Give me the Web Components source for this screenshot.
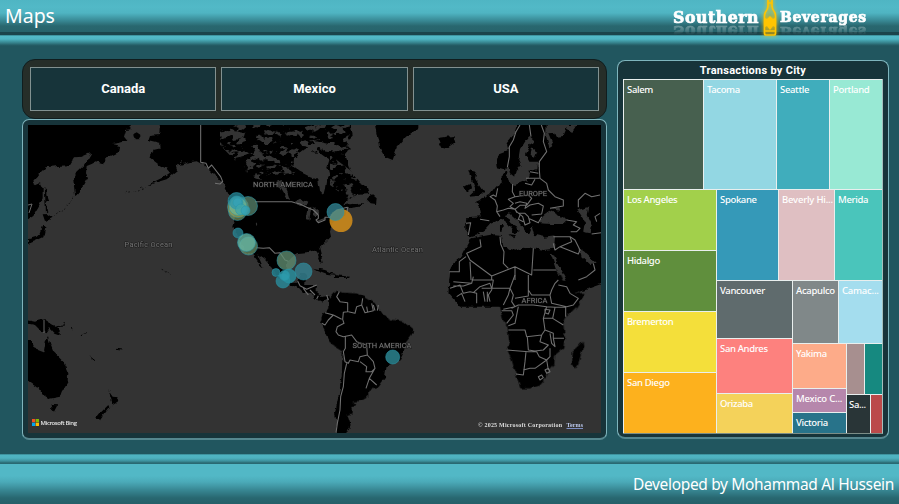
<!DOCTYPE html>
<html lang="en"><head><meta charset="utf-8"><title>Maps</title>
<style>html,body{margin:0;height:100%;overflow:hidden;background:#21565f;font-family:"Noto Sans",sans-serif}</style></head>
<body><report-page></report-page>
<script>
const define=(name,html)=>customElements.define(name,class extends HTMLElement{
  constructor(){super();this.attachShadow({mode:'open'}).innerHTML=html;}
});

define('brand-logo',`<style>
:host{display:flex;align-items:flex-start;height:38px;font:bold 17.500px/20px "DejaVu Serif Condensed","DejaVu Serif",serif;font-stretch:condensed;color:#fff;-webkit-text-stroke:.7px #fff}
span{display:block;margin-top:7px;height:20px;white-space:nowrap;-webkit-box-reflect:below -5px linear-gradient(transparent 35%,rgba(255,255,255,.45))}
.a{width:87px;letter-spacing:.53px}.b{width:87px;font-size:15.500px;letter-spacing:.7px}
svg{width:20px;height:42px;overflow:visible;filter:drop-shadow(0 0 2px #ffc400)}
</style><span class="a">Southern</span>
<svg viewBox="0 0 20 42"><path d="M8 -2V6Q8 9 5.500 12Q4.500 14 4.500 16V33Q4.500 35 6 35H14Q15.500 35 15.500 33V16Q15.500 14 14.500 12Q12 9 12 6V-2" fill="#ffc400" fill-opacity=".12" stroke="#ffc400" stroke-width="1.700"/><path d="M8 3H12M5 31H15" stroke="#ffc400" stroke-width="1.500"/><path d="M5 18L7 19L10 16L13 19L15 18V27L13 26L10 30L7 26L5 27Z" fill="#ffc400"/></svg>
<span class="b">Beverages</span>`);

define('page-header',`<style>
:host{display:block;height:46px}
.bar{height:35px;box-sizing:border-box;border-bottom:3px solid #1b454c;background:linear-gradient(#4fb5c3,#52b9c7 7px,#4fb4c2 13px,#3a8c98 20px,#29676f 26px,#27636b 32px);display:flex;justify-content:space-between;padding:0 31px 0 5px}
.line{height:11px;background:linear-gradient(#2b717a,#53bac8 1px,#4fb6c4 4px,#347f89 8px,#265f68 10px,#21565f)}
h1{margin:0;font:400 19.500px/31px "Noto Sans",sans-serif;color:#fff;width:60px}
brand-logo{width:195px}
</style><div class="bar"><h1>Maps</h1><brand-logo></brand-logo></div><div class="line"></div>`);

define('page-footer',`<style>
:host{display:block;height:50px}
.line{height:10px;background:linear-gradient(#2e737d,#4fb4c2 1px,#4eb2c0 4px,#3d919d 7px,#296871 9px,#2a6b74)}
.bar{height:40px;text-align:right;padding-right:5px;font:400 15.500px/40px "Noto Sans",sans-serif;letter-spacing:-.34px;color:#fff;background:linear-gradient(#52b8c6,#52b8c6 12px,#4baab8 18px,#388793 26px,#286770 34px,#266069)}
</style><div class="line"></div><div class="bar">Developed by Mohammad Al Hussein</div>`);

define('country-button',`<style>
:host{flex:1;display:flex;align-items:center;justify-content:center;box-sizing:border-box;border:1px solid #829190;background:#17343a;color:#fff;font:bold 13px/16px Roboto,sans-serif}
</style><slot></slot>`);
define('country-slicer',`<style>
:host{display:flex;gap:5px;box-sizing:border-box;height:60px;padding:7px;border:1px solid #101d1e;border-radius:13px;background:#262e29}
</style><slot></slot>`);
define('panel-card',`<style>
:host{display:flex;flex-direction:column;box-sizing:border-box;background:#17343a;border:1px solid #7fb5bd;border-bottom:2px solid #55868e;border-radius:7px}
</style><slot></slot>`);

define('tree-split',`<style>:host{display:flex;min-width:0;min-height:0}:host([col]){flex-direction:column}</style><slot></slot>`);
define('tree-tile',`<style>
:host{display:block;box-sizing:border-box;min-width:0;min-height:0;overflow:hidden;border-left:1px solid #e9efee;border-top:1px solid #e9efee;padding:2px 0 0 3px;color:#fff;font:500 9.500px/15px "Noto Sans",sans-serif;letter-spacing:-.34px;white-space:nowrap}
</style><slot></slot>`);

const split=(dir,size,...kids)=>`<tree-split ${dir} style="flex:0 0 ${size}px">${kids.join('')}</tree-split>`;
const tile=(size,color,label='',fit='')=>`<tree-tile style="flex:0 0 ${size}px;background:${color};${fit}">${label}</tree-tile>`;
define('city-treemap',`<style>:host{display:flex;flex-direction:column;box-sizing:border-box;width:260px;height:355px;border-right:1px solid #a4bfbd;border-bottom:1px solid #7c8d87}</style>`+
 split('row',110,tile(80,'#47604f','Salem'),tile(73,'#93d7e3','Tacoma'),tile(53,'#40adbc','Seattle'),tile(53,'#98e9d4','Portland'))+
 split('row',244,
  split('col',93,tile(61,'#a2d04b','Los Angeles'),tile(61,'#608f3d','Hidalgo'),tile(61,'#f4df3a','Bremerton'),tile(61,'#fdb11d','San Diego')),
  split('col',166,
   split('row',91,tile(62,'#3599b8','Spokane'),tile(56,'#dfbfc2','Beverly Hi...','letter-spacing:-.2px'),tile(48,'#4ac5bb','Merida')),
   split('row',153,
    split('col',76,tile(58,'#5f6b6d','Vancouver'),tile(55,'#fd817e','San Andres'),tile(40,'#f4d25a','Orizaba')),
    split('col',90,
     split('row',63,tile(46,'#808889','Acapulco','letter-spacing:-.3px'),tile(44,'#a4ddee','Camac...','letter-spacing:-.2px')),
     split('row',90,
      split('col',54,tile(45,'#fdab89','Yakima'),tile(24,'#b687ac','Mexico C...','letter-spacing:-.2px'),tile(21,'#28738a','Victoria')),
      split('col',36,split('row',51,tile(18,'#a78f8f'),tile(18,'#168980')),
       split('row',39,tile(24,'#293537','Sa...','padding-left:2px'),tile(12,'#bb4a4a')))))))));

// Every bubble: centre x, centre y, radius, fill, opacity
const bubbles=[[237.500,211.500,9,'#8aaa69',.6],[238,207,10.500,'#b7a845',.6],[248,206,9.500,'#608f75',.7],[236.500,201,8.500,'#2992a3',.72],[238,206.500,9,'#6eb597',.75],[236.500,202.500,6.500,'#3599a9',.8],[237.500,202.500,4.500,'#35a2b5',.9],[241,209.500,5.500,'#3fa7ab',.75],[245.500,210.500,4.500,'#35a3b5',.8],[341,220.500,11.500,'#cc891b',.9],[335.500,212,8.500,'#358999',.75],[238,233,5,'#287c8b',.85],[248.500,246,9,'#71986d',.7],[246.500,242.500,9,'#65b5a2',.8],[286.500,260.500,9.500,'#608d71',.78],[303.500,271.500,8.500,'#35808f',.85],[276,272.500,4,'#237987',.9],[283,281,7,'#2a8797',.85],[289,276,7,'#2993a3',.8],[284.500,275.500,5,'#2d9cae',.8],[392.700,357,7,'#277681',.95]];
define('world-map',`<style>
:host{display:block;width:573px;height:309px;overflow:hidden}svg{display:block}
.land{fill:#000}.sea{fill:#333}.thin{fill:none;stroke:#000;stroke-width:4}.edge{fill:none;stroke:#707070;stroke-width:3.200;stroke-linejoin:round}
.name{font:7.500px Roboto,sans-serif;fill:#777;stroke:#181818;stroke-width:.9px;paint-order:stroke}
</style><svg width="574" height="309" viewBox="28 125 574 309">
<defs><filter id="coast" x="-5%" y="-5%" width="110%" height="110%" color-interpolation-filters="sRGB"><feTurbulence type="fractalNoise" baseFrequency=".16" numOctaves="2" seed="4"/><feDisplacementMap in="SourceGraphic" scale="5" xChannelSelector="R" yChannelSelector="G"/></filter>
<filter id="lakes" x="0" y="0" width="100%" height="100%" color-interpolation-filters="sRGB"><feTurbulence type="fractalNoise" baseFrequency=".11 .16" numOctaves="3" seed="8"/><feColorMatrix values="0 0 0 0 .2  0 0 0 0 .2  0 0 0 0 .2  14 0 0 0 -7.500"/><feComposite in2="SourceGraphic" operator="in"/></filter></defs>
<rect x="28" y="125" width="574" height="309" fill="#333"/>
<g filter="url(#coast)">
<g transform="translate(20 120) scale(.33333)">
 <path class="land" d="M10 0H325L335 28L318 30L312 50L322 62L300 68L275 72L300 78L298 95L280 104L265 112L248 130L230 124L215 132L200 138L198 160L204 172L196 185L188 200L170 222L165 225L160 180L172 155L190 138L214 98L185 110L165 112L150 136L110 138L80 142L62 160L38 188L48 196L60 190L68 205V235L55 260L40 285L10 305Z M74 200L82 210V225L88 242L80 245L84 275L78 280Z M68 283L82 282L98 293L86 300L75 303Z M70 316L76 325L70 352L48 362L24 372V358L50 350L62 338Z M340 42L352 36L364 44L356 58H344Z"/>
 <path class="thin" style="stroke-width:2" stroke-dasharray="5 5" d="M100 290Q140 265 166 228M315 218L350 212L400 190M425 448L445 456L458 468"/>
 <path class="land" d="M10 598L45 605L75 598L110 620L123 645L103 638L90 624L80 640L60 630L45 615L10 608Z M10 660H35L45 685L72 695L78 660L84 648L90 670L100 695L130 725L145 760L143 785L125 815L120 830L85 837L65 825L60 805L45 800L24 785H10Z M95 855L115 856L105 875L96 865Z M265 810L272 822L278 830L296 832L290 848L276 856V842Z M265 855L268 862L240 901L228 895L240 880Z"/>
 <path class="thin" style="stroke-width:3" d="M112 620L132 618L136 606M152 620L160 626M182 644L200 638M212 712L225 722M288 688L304 690"/>
</g>
<g transform="translate(200 120) scale(.33333)">
 <path class="land" d="M-120 0L-122 45L-150 48L-154 60L-120 68L-118 85L-140 90L-145 105L-152 112L-122 135L-100 146L-90 158L-110 172L-140 186L-162 198L-135 188L-100 178L-78 160L-66 150L-70 138L-52 120L-60 135L-40 128L-10 124L20 140L45 165L75 197L88 225L84 240L95 260L105 300L100 320L108 340L125 372L140 395L155 402L175 428L190 444L182 425L172 403L190 415L215 440L235 470L260 486L295 505L305 515L335 520L345 535L365 545L385 535L394 550L388 525L365 528L350 515L350 495L315 495L320 460L300 462L292 485H272L258 460L262 425L290 400L320 397L345 391L353 402L362 428L368 425L358 385L375 368L393 350L390 335L395 315L410 300L430 290L443 265L480 260L489 246L430 256L440 240L470 225L507 222L500 200L480 190L465 170L450 150L435 105L452 85L440 65L458 50L450 0Z M500 238L515 222L530 235L528 252L512 250Z M525 0L533 40L540 80L558 112L578 120L592 80L618 50L655 25V0Z"/>
 <path class="sea" d="M325 80L300 100L282 115L280 140L300 155L330 170L355 180L360 215L370 225L375 205L378 185L388 165L382 140L388 120L360 100L350 82Z M285 245L300 236L325 248L322 255L300 258Z M322 265L334 260L328 302L318 300Z M340 260L358 276L350 290L342 285Z M348 304L375 293V298L355 309Z M378 290L396 284V289Z M230 185L245 180L262 215L270 240L260 235Z M150 115L180 95L190 106L165 120Z M88 25L110 40L135 35L130 55L105 60Z M330 60L400 75L440 88L400 95L370 90Z M165 305L175 312L172 318Z"/>
 <path class="land" d="M335 85L355 86L350 98L338 97Z M340 444L375 450L410 465L382 462L350 450Z M405 465L450 470L452 474H405Z"/>
</g>
<g transform="translate(400 120) scale(.33333)">
 <path class="land" d="M355 0L340 45L320 70L325 90L300 100L288 120L290 145L310 150L325 140L330 160L345 172L350 150L362 135L355 120L360 90L375 65L388 48L402 60L385 85L375 105L385 125H415L412 148L390 152L382 180L345 195L330 188L322 180L318 155L308 160V186L288 200L270 225L225 245L240 265L245 292L198 295L200 345L212 352L232 346L255 330L275 308L300 298L320 312L345 342L356 336L352 320L335 310L318 285L330 280L352 300L375 332L388 342L398 318L405 345L430 350L466 346L462 386L430 390L400 385L370 380L350 392L310 380L305 345L280 343L215 355L195 390L185 410L160 430L150 460L145 520L180 560H330L470 480L500 530L640 480V0Z M208 150L230 155L225 175L240 200L250 215L236 228L208 230L228 212L215 175Z M192 198L210 188L213 205L200 216Z M112 54L140 50L160 48L166 68L145 83L122 80Z M300 315H308V335H300Z M325 342L345 345L340 352Z"/>
 <path class="sea" d="M420 310L430 285L448 272L470 282L505 300L490 312L455 312Z M450 268L475 262L478 272Z M532 270L565 262L560 285L576 318L572 340L550 336L555 305Z M440 15L530 15L515 35L500 25L490 48L470 50L465 38L445 40L460 75L448 85L438 50Z M450 395L460 405L500 482L480 482L465 440Z M538 385L560 400L590 428L570 432L545 410Z M395 85L412 95L405 112L392 105Z"/>
</g>
<g transform="translate(200 280) scale(.33333)">
 <path class="land" d="M385 60L400 40L415 32L430 38L470 40L490 50L530 75L550 105L580 120L610 125L640 150L635 165L615 190L612 215L600 240L560 258L555 290L530 325L505 330V350L485 362L460 365L470 375L455 380V400L442 405L452 435L435 470H402L412 430L405 400L415 350L425 290L428 215L395 195L370 145L360 130L368 105L385 85Z"/>
</g>
<g transform="translate(400 280) scale(.33333)">
 <path class="land" d="M148 0L150 30L180 60L205 78L235 75L250 68H280L300 80L308 115L322 140L328 185L320 210L335 240L348 285L362 325H390L415 318L440 290L445 270L463 250L465 225L490 205L494 170L490 130L500 110L530 80L557 38L512 42L500 25L480 -15L300 -40Z M498 -30L512 26L580 -5L560 -40Z M548 182L550 200L535 250L525 265L513 255L515 215L532 200Z"/>
</g></g>
<path filter="url(#lakes)" d="M220 125H350V155L300 150L292 185L252 178L220 145ZM330 155L350 170L365 185L350 200L330 185Z"/>
<g transform="translate(200 120) scale(.33333)"><path class="edge" d="M2 0V127L18 130L25 145L35 135L62 170L68 185L60 192L45 190M165 245H275L285 248L300 252L320 262L340 270L355 285V295L348 300L355 308L375 300V292H390L410 270L430 265L442 262V275M170 383L190 385L208 383L225 400L240 398L255 420L265 424M293 483L300 497L320 508L350 495M310 505L325 525M330 510L345 525M350 537L355 527M380 525L385 540"/></g>
<g transform="translate(400 120) scale(.33333)"><path class="edge" d="M360 15L348 35L340 60L328 80V110L322 142M388 15L393 50M424 15L433 40L430 65L440 95L418 125V150L420 175L440 190L445 210L465 230L490 240V258L450 265M390 155L415 160M378 175H405L418 175M375 190L395 195L405 178M338 192L337 215L345 230L325 238L340 250L330 260L345 268L360 256H380L395 235L385 225L345 230M293 205L288 230L280 225L270 230L285 240L292 258L290 275L310 270L325 265L345 268L350 275L368 290L375 315L390 308L385 290L375 280L355 280M345 250L360 245L380 250L375 265L390 255L415 250L430 258L425 282L395 285M385 295L415 308L425 290M350 278L345 265M360 285L355 298L370 305M290 275L300 290M240 298L268 302M198 310L212 308L205 345M240 358L243 380L200 400L210 420L275 468L345 440L395 465L400 385M300 350L302 372L312 395L310 430L325 445M345 440V480M275 468V480M400 450H470M210 425L213 480M198 410L178 425V455H148M460 350H510L515 365L480 380L465 390L460 370M510 350L525 360L540 390L535 402L480 380M500 300L530 305L520 315L540 325L530 335H512M535 262V240L555 220L575 230L600 225M590 305L585 290L600 280M575 342L603 338M580 430L585 450L560 470L535 480"/></g>
<g transform="translate(200 280) scale(.33333)"><path class="edge" d="M418 35L410 50L420 65L443 68V95L430 97L428 118L432 130L412 140L408 155L415 165L430 170L455 165L470 185L500 195L502 225L480 230L475 245L450 240L445 250L435 245L430 215L436 205V170M375 98L400 105L425 118M400 105L385 120L375 135L365 130M445 95L465 100L470 80L485 75L488 55M485 75L495 98L520 92L515 70M500 80L503 97M520 75L525 92M535 75L532 92M502 225L520 245L525 265L515 275L498 275L500 260L480 245M525 265L508 295L498 325M508 295L530 315M440 250L433 280L430 320L422 350L420 390L412 430L408 459"/></g>
<g transform="translate(400 280) scale(.33333)"><path class="edge" d="M160 5L215 10L220 -10M215 10L190 18H160M150 25L180 15L190 40L210 35L230 40V70M170 50L185 40L195 65M220 38L240 20L270 10L275 25H245M250 35L255 65M262 35V65M215 0H280L275 30L265 45L270 65M275 25L330 25L345 -15M330 25L325 45L310 75M330 25L340 45L335 65L345 80L310 88M345 55L385 48L385 -15M385 30L395 45H450L455 30L465 10L475 0M475 15L500 20L510 40L535 55L520 75L500 80L455 70L450 45M305 92H335L340 105L320 130M335 85L355 75L400 75L440 80L430 115L435 150L425 165L380 170L375 150H325M325 137L345 130L355 80M440 80L465 82L458 115L430 115M465 82L497 82V110M458 115L490 135M435 150L460 160V175H492M460 175L465 200L455 190L450 160M425 165L420 185L445 195L430 210L405 213L385 210L382 170M320 210L385 215L410 215L418 230L440 240L450 230V205M378 215L375 245L370 285L348 282M370 270L390 265L405 265L440 240M440 240L445 270M435 270L445 265L450 275L440 280ZM415 290L425 285L430 293L420 300ZM435 88L450 90L445 102L435 98Z"/></g>
<path class="edge" style="stroke-width:.9" d="M44 320V333M28 205L32 204L29 213"/>
<g class="name"><text x="253" y="187" textLength="60">NORTH AMERICA</text><text x="519" y="196" textLength="28">EUROPE</text><text x="521.500" y="303" textLength="26">AFRICA</text><text x="352.500" y="348" textLength="59">SOUTH AMERICA</text><text x="124.500" y="247" textLength="48">Pacific Ocean</text><text x="372" y="251.500" textLength="51">Atlantic Ocean</text></g>
${bubbles.map(b=>`<circle cx="${b[0]}" cy="${b[1]}" r="${b[2]}" fill="${b[3]}" fill-opacity="${b[4]}" stroke="#2997a8" stroke-opacity="${b[3]=='#cc891b'?0:.7}" stroke-width=".8"/>`).join('')}
<path fill="#f25022" d="M32 419h3.300v3.300H32z"/><path fill="#7fba00" d="M35.700 419H39v3.300h-3.300z"/><path fill="#00a4ef" d="M32 422.700h3.300v3.300H32z"/><path fill="#ffb900" d="M35.700 422.700H39v3.300h-3.300z"/>
<text x="40.500" y="425" textLength="36.500" fill="#e4e4e4" font-size="6" font-family="Open Sans,sans-serif" font-weight="600">Microsoft Bing</text>
<text x="478" y="427" textLength="84" fill="#ddd" font-size="6" font-family="Liberation Serif,serif" font-weight="bold">© 2025 Microsoft Corporation</text>
<text x="566.500" y="427" textLength="16.500" fill="#bcc9ed" font-size="6" font-family="Liberation Serif,serif" font-weight="bold">Terms</text><path d="M566.500 428.500H583" stroke="#7d8fc4"/>
</svg>`);

define('report-page',`<style>
:host{display:flex;flex-direction:column;width:899px;height:504px;background:#21565f}
main{flex:1;display:grid;grid-template-columns:585px 272px;column-gap:10px;padding:13px 10px 14px 22px;box-sizing:border-box;align-items:start}
.left{display:flex;flex-direction:column;gap:0}
.map{height:321px;padding:5px}
.tree{height:379px;padding:0 5px 4px;margin-top:1px;border-radius:8px}
h2{margin:0;text-align:center;font:bold 11px/19px Roboto,sans-serif;color:#fff;letter-spacing:.28px;height:18px;padding-right:0}
</style><page-header></page-header><main><div class="left">
<country-slicer><country-button>Canada</country-button><country-button>Mexico</country-button><country-button>USA</country-button></country-slicer>
<panel-card class="map"><world-map></world-map></panel-card></div>
<panel-card class="tree"><h2>Transactions by City</h2><city-treemap></city-treemap></panel-card></main><page-footer></page-footer>`);
</script></body></html>
